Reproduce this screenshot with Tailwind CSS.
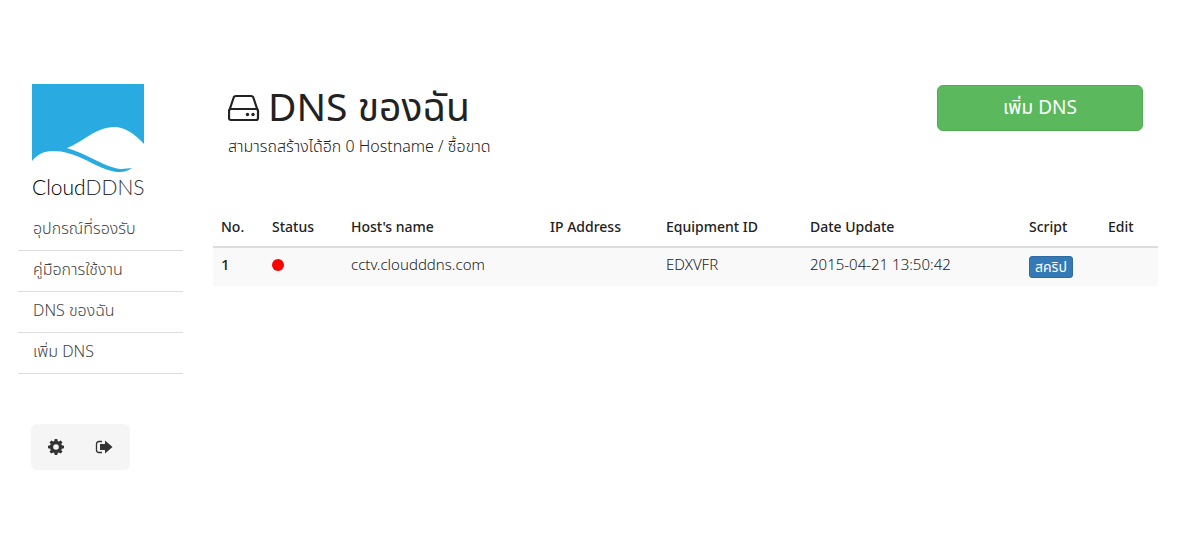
<!DOCTYPE html>
<html lang="th">
<head>
    <meta charset="UTF-8">
    <meta name="viewport" content="width=device-width, initial-scale=1.0">
    <title>DNS ของฉัน - CloudDDNS</title>
    <script src="https://cdn.jsdelivr.net/npm/@tailwindcss/browser@4"></script>
</head>
<body class="bg-white font-['Noto_Sans','Noto_Sans_Thai',sans-serif] text-[15px] leading-5 font-light text-[#222]">
    <div class="flex gap-[30px] pt-[84px] pl-[18px] pr-[43px]">
        <!-- Sidebar -->
        <aside class="w-[165px] shrink-0">
            <a href="/" class="block ml-3.5 w-[116px]">
                <svg class="block" width="116" height="114" viewBox="0 0 116 114" role="img" aria-label="CloudDDNS">
                    <path fill="#29abe2" d="M0 0H112V60C103 50 93 43 82 43C64 43 51 58 35 64C53 69 68 80 83 84C89 86 96 84 100 84C94 89 85 89 76 86C58 80 43 67 21 67C11 67 5 71 0 77Z"/>
                    <text x="0" y="111" font-family="Lato, sans-serif" font-size="21" font-weight="300" fill="#000">Cloud<tspan fill="#333">DDNS</tspan></text>
                </svg>
            </a>
            <nav class="mt-3 text-[16px] text-[#444]">
                <a href="#" class="block px-[15px] pt-2 pb-3 leading-5 border-b border-[#ddd]">อุปกรณ์ที่รองรับ</a>
                <a href="#" class="block px-[15px] pt-2 pb-3 leading-5 border-b border-[#ddd]">คู่มือการใช้งาน</a>
                <a href="#" class="block px-[15px] pt-2 pb-3 leading-5 border-b border-[#ddd]">DNS ของฉัน</a>
                <a href="#" class="block px-[15px] pt-2 pb-3 leading-5 border-b border-[#ddd]">เพิ่ม DNS</a>
            </nav>
            <div class="mt-[50px] ml-[13px] inline-flex rounded-md bg-[#f5f5f5] text-[#333]">
                <button type="button" aria-label="Settings" class="flex h-[46px] w-[50px] items-center justify-center">
                    <svg width="16" height="16" viewBox="0 0 16 16" fill="currentColor">
                        <path fill-rule="evenodd" d="M6.7 0h2.6l.4 2.1 1.1.5 1.8-1.2 1.9 1.9-1.2 1.8.5 1.1 2.2.5v2.6l-2.2.5-.5 1.1 1.2 1.8-1.9 1.9-1.8-1.2-1.1.5L9.3 16H6.7l-.4-2.1-1.1-.5-1.8 1.2-1.9-1.9 1.2-1.8-.5-1.1L0 9.300V6.700l2.200-.5.5-1.100-1.200-1.800 1.900-1.900 1.800 1.200 1.100-.5zM8 5.200a2.800 2.800 0 1 0 0 5.600 2.800 2.800 0 0 0 0-5.600z"/>
                    </svg>
                </button>
                <button type="button" aria-label="Log out" class="flex h-[46px] w-[49px] items-center justify-center pr-1">
                    <svg width="18" height="16" viewBox="0 0 18 16" fill="currentColor">
                        <path fill="none" stroke="currentColor" stroke-width="1.3" d="M7 2.500H4Q1.500 2.500 1.500 5V11Q1.500 13.500 4 13.500H7"/>
                        <path d="M5 5H10V1.500L17.500 8L10 14.500V11H5Z"/>
                    </svg>
                </button>
            </div>
        </aside>

        <!-- Main content -->
        <main class="min-w-0 flex-1">
            <div class="flex items-start justify-between px-[15px]">
                <div>
                    <h1 class="flex items-center gap-2 text-[39px] leading-[44px] font-normal">
                        <svg class="mt-1" width="32" height="28" viewBox="0 0 32 28" fill="none" stroke="currentColor" stroke-width="2.2">
                            <path d="M1.500 16L5.500 4Q6 2 8 2H23Q25 2 25.500 4L29.500 16"/>
                            <rect x="1" y="15" width="29" height="11" rx="2"/>
                            <circle cx="19.500" cy="20.500" r="1.700" fill="currentColor" stroke="none"/>
                            <circle cx="25" cy="20.500" r="1.700" fill="currentColor" stroke="none"/>
                        </svg>
                        DNS ของฉัน
                    </h1>
                    <p class="mt-2 mb-0.5 text-[16px] leading-5">สามารถสร้างได้อีก 0 Hostname / ซื้อขาด</p>
                </div>
                <button type="button" class="mt-px h-[46px] w-[206px] rounded-md border border-[#4cae4c] bg-[#5cb85c] pb-0.5 text-[19px] font-normal text-white">เพิ่ม DNS</button>
            </div>

            <table class="mt-[49px] w-full table-fixed text-left">
                <thead class="text-[14px]">
                    <tr class="border-b-2 border-[#ddd]">
                        <th class="w-[51px] px-2 pt-2.5 pb-[9px] font-medium">No.</th>
                        <th class="w-[79px] px-2 pt-2.5 pb-[9px] font-medium">Status</th>
                        <th class="w-[199px] px-2 pt-2.5 pb-[9px] font-medium">Host's name</th>
                        <th class="w-[116px] px-2 pt-2.5 pb-[9px] font-medium">IP Address</th>
                        <th class="w-[144px] px-2 pt-2.5 pb-[9px] font-medium">Equipment ID</th>
                        <th class="w-[219px] px-2 pt-2.5 pb-[9px] font-medium">Date Update</th>
                        <th class="w-[79px] px-2 pt-2.5 pb-[9px] font-medium">Script</th>
                        <th class="w-[58px] px-2 pt-2.5 pb-[9px] font-medium">Edit</th>
                    </tr>
                </thead>
                <tbody>
                    <tr class="bg-[#f9f9f9] align-top">
                        <th class="px-2 pt-1.5 font-medium">1</th>
                        <td class="p-2"><span class="mt-[3px] block size-3 rounded-full bg-[#f00]"></span></td>
                        <td class="px-2 pt-1.5">cctv.cloudddns.com</td>
                        <td class="px-2 pt-1.5"></td>
                        <td class="px-2 pt-1.5">EDXVFR</td>
                        <td class="px-2 pt-1.5">2015-04-21 13:50:42</td>
                        <td class="p-2"><button type="button" class="block h-[22px] rounded-[3px] border border-[#2e6da4] bg-[#337ab7] px-[5px] text-[14px] leading-5 font-normal text-white">สคริป</button></td>
                        <td class="px-2 pt-1.5"></td>
                    </tr>
                </tbody>
            </table>
        </main>
    </div>
</body>
</html>
